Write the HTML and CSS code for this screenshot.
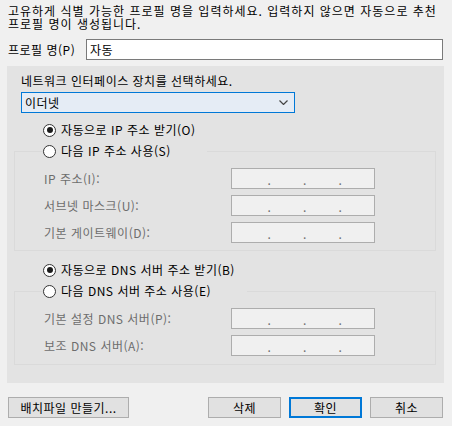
FILE: index.html
```html
<!DOCTYPE html>
<html lang="ko">
<head>
<meta charset="utf-8">
<link rel="stylesheet" href="styles.css">
</head>
<body>
<div class="dialog">
  <p class="desc">고유하게 식별 가능한 프로필 명을 입력하세요. 입력하지 않으면 자동으로 추천<br>프로필 명이 생성됩니다.</p>
  <div class="profile-row">
    <label class="profile-label">프로필 명(P)</label>
    <div class="textbox">자동</div>
  </div>
  <div class="panel">
    <div class="panel-label">네트워크 인터페이스 장치를 선택하세요.</div>
    <div class="select">
      <span>이더넷</span>
      <svg class="chev" width="9" height="5" viewBox="0 0 9 5"><path d="M0.5 0.5 L4.5 4.5 L8.5 0.5" fill="none" stroke="#444" stroke-width="1.2"/></svg>
    </div>
    <div class="radio-row first"><span class="radio checked"></span>자동으로 IP 주소 받기(O)</div>
    <fieldset class="group ipgroup">
      <legend class="radio-row"><span class="radio"></span>다음 IP 주소 사용(S)</legend>
      <div class="field-row"><span class="flabel">IP 주소(I):</span><div class="ip"><i></i><b>.</b><i></i><b>.</b><i></i><b>.</b><i></i></div></div>
      <div class="field-row"><span class="flabel">서브넷 마스크(U):</span><div class="ip"><i></i><b>.</b><i></i><b>.</b><i></i><b>.</b><i></i></div></div>
      <div class="field-row"><span class="flabel">기본 게이트웨이(D):</span><div class="ip"><i></i><b>.</b><i></i><b>.</b><i></i><b>.</b><i></i></div></div>
    </fieldset>
    <div class="radio-row dns-first"><span class="radio checked"></span>자동으로 DNS 서버 주소 받기(B)</div>
    <fieldset class="group dnsgroup">
      <legend class="radio-row"><span class="radio"></span>다음 DNS 서버 주소 사용(E)</legend>
      <div class="field-row"><span class="flabel">기본 설정 DNS 서버(P):</span><div class="ip"><i></i><b>.</b><i></i><b>.</b><i></i><b>.</b><i></i></div></div>
      <div class="field-row"><span class="flabel">보조 DNS 서버(A):</span><div class="ip"><i></i><b>.</b><i></i><b>.</b><i></i><b>.</b><i></i></div></div>
    </fieldset>
  </div>
  <div class="buttons">
    <button class="btn batch">배치파일 만들기...</button>
    <div class="spacer"></div>
    <button class="btn">삭제</button>
    <button class="btn default">확인</button>
    <button class="btn">취소</button>
  </div>
</div>
</body>
</html>
```
FILE: styles.css
```css
html, body {
  margin: 0;
  padding: 0;
  background: #f0f0f0;
}
body {
  font-family: "Noto Sans CJK KR", "Noto Sans", sans-serif;
  font-size: 12px;
  letter-spacing: 0.5px;
  color: #000;
  width: 452px;
  height: 426px;
  overflow: hidden;
}
.dialog {
  display: flex;
  flex-direction: column;
}
.desc {
  margin: 0;
  padding: 4px 8px 0 8px;
  line-height: 13px;
  letter-spacing: 1px;
  white-space: nowrap;
}
.profile-row {
  display: flex;
  align-items: center;
  margin: 9px 9px 0 8px;
}
.profile-label {
  width: 78px;
  line-height: 16px;
}
.textbox {
  flex: 1;
  height: 19px;
  line-height: 19px;
  border: 1px solid #7a7a7a;
  background: #fff;
  padding-left: 3px;
}
.panel {
  margin: 6px 8px 0 7px;
  height: 317px;
  background: #e3e3e3;
  box-sizing: border-box;
  padding: 7px 7px 0 7px;
  display: flex;
  flex-direction: column;
}
.panel-label {
  margin-left: 7px;
  line-height: 16px;
}
.select {
  margin: 3px 0 0 7px;
  width: 263px;
  height: 19px;
  border: 1px solid #0078d7;
  background: #e5ecf5;
  display: flex;
  align-items: center;
  justify-content: space-between;
  padding: 0 6px 0 3px;
  box-sizing: content-box;
}
.chev { display: block; }
.radio-row {
  display: flex;
  align-items: center;
  line-height: 16px;
  height: 16px;
}
.radio-row.first {
  margin: 9px 0 0 29px;
}
.radio {
  width: 11px;
  height: 11px;
  border: 1px solid #333;
  border-radius: 50%;
  background: #fff;
  margin-right: 5px;
  position: relative;
  flex: none;
}
.radio.checked::after {
  content: "";
  position: absolute;
  left: 2.5px;
  top: 2.5px;
  width: 6px;
  height: 6px;
  border-radius: 50%;
  background: #1a1a1a;
}
.group {
  margin: 5px 1px 0 0;
  border: 1px solid #dadada;
  padding: 9px 0 7px 29px;
  display: flex;
  flex-direction: column;
  gap: 6px;
}
.dnsgroup {
  padding-bottom: 8px;
}
.group legend {
  padding: 0 36px 0 0;
  margin-left: -1px;
}
.field-row {
  display: flex;
  align-items: center;
  height: 21px;
}
.flabel {
  width: 187px;
  color: #6d6d6d;
  line-height: 16px;
}
.ip {
  width: 140px;
  height: 19px;
  border: 1px solid #adadad;
  background: #f0f0f0;
  display: flex;
  align-items: flex-end;
  padding-left: 2px;
  box-sizing: content-box;
}
.ip i { flex: 1; }
.ip b {
  width: 2px;
  font-weight: normal;
  color: #6d6d6d;
  line-height: 16px;
}
.radio-row.dns-first {
  margin: 11px 0 0 29px;
}
.buttons {
  display: flex;
  margin: 14px 9px 0 8px;
  gap: 8px;
}
.spacer { flex: 1; }
.btn {
  font-family: inherit;
  font-size: 12px;
  letter-spacing: inherit;
  color: #000;
  height: 21px;
  width: 73px;
  background: #e1e1e1;
  border: 1px solid #adadad;
  padding: 0;
  line-height: 16px;
}
.btn.batch { width: 121px; }
.btn.default { border: 2px solid #0078d7; }
```
